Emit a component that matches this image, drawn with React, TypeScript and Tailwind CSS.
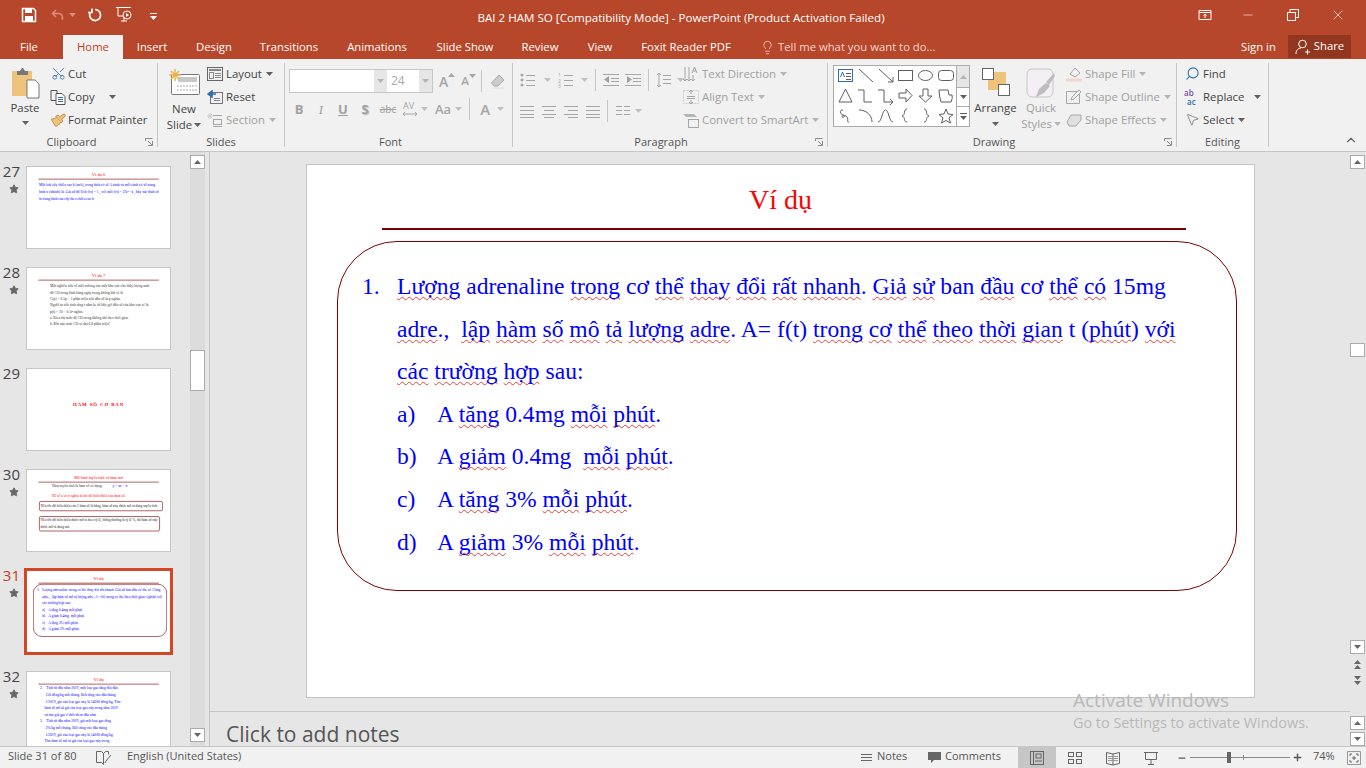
import React from 'react';
import { Scissors, Search, MousePointer2, Lightbulb, Minus, Plus, X, Star, ChevronUp, Paintbrush } from 'lucide-react';

const GREY = '#a6a6a6';

const Caret = ({ color = '#606060', className = '' }: { color?: string; className?: string }) => (
  <svg width="7" height="4" viewBox="0 0 7 4" className={`shrink-0 ${className}`}><path d="M0 0h7L3.5 4z" fill={color} /></svg>
);

const Ic = ({ size = 16, children, className = '' }: { size?: number; children: React.ReactNode; className?: string }) => (
  <svg width={size} height={size} viewBox={`0 0 ${size} ${size}`} fill="none" className={`shrink-0 overflow-visible ${className}`}>{children}</svg>
);

// small word with the spell check squiggle
const W = ({ children }: { children: React.ReactNode }) => (
  <span className="underline decoration-wavy decoration-[#e8403a] decoration-1 underline-offset-2 [text-decoration-skip-ink:none]">{children}</span>
);

const TABS = [
  { label: 'Insert', w: 'w-[58px]' },
  { label: 'Design', w: 'w-[66px]' },
  { label: 'Transitions', w: 'w-[84px]' },
  { label: 'Animations', w: 'w-[92px]' },
  { label: 'Slide Show', w: 'w-[84px]' },
  { label: 'Review', w: 'w-[66px]' },
  { label: 'View', w: 'w-[54px]' },
  { label: 'Foxit Reader PDF', w: 'w-[118px]' },
];

const TitleBar = () => (
  <div className="flex h-[35px] items-center text-white">
    <div className="flex w-[170px] items-center pb-[5px] pl-[21px]">
      <Ic size={16}><path d="M1.5 1.5h11l2 2v11h-13z" stroke="#fff" strokeWidth="1.5" /><rect x="4" y="2" width="7" height="4" fill="#fff" /><rect x="4" y="9" width="8" height="5" fill="#fff" /></Ic>
      <Ic size={16} className="ml-[13px]"><path d="M6 3 2.5 6.5 6 10M3 6.5h6a4 4 0 0 1 3 6" stroke="#d98e78" strokeWidth="1.6" /></Ic>
      <Caret color="#d98e78" className="ml-[3px]" />
      <Ic size={16} className="ml-[11px]"><path d="M8 2.5a5.5 5.5 0 1 1-4.500 2.500M5 1.500v4h-4" stroke="#fff" strokeWidth="1.7" /></Ic>
      <Ic size={18} className="ml-[12px]"><path d="M1 1.5h15M3 2v8h5M6 15h6M9 11v4" stroke="#fff" /><circle cx="12" cy="9" r="4" stroke="#fff" /><path d="M11 7l3 2-3 2z" fill="#fff" /></Ic>
      <svg width="7" height="7" viewBox="0 0 7 7" className="ml-[17px] mt-[2px]"><path d="M0 0h7v1H0zM0 3h7L3.5 7z" fill="#fff" /></svg>
    </div>
    <div className="w-[1006px] pl-[16px] text-center text-[11.6px] whitespace-nowrap">BAI 2 HAM SO [Compatibility Mode] - PowerPoint (Product Activation Failed)</div>
    <div className="flex flex-1 items-center pb-[5px]">
      <Ic size={14} className="ml-[22px]"><path d="M1 2.5h12v9H1zM1 4.5h12M7 10V6M5.5 7.5 7 6l1.5 1.5" stroke="#fff" /></Ic>
      <Minus size={14} strokeWidth={1} className="ml-[29px]" />
      <Ic size={12} className="ml-[32px]"><path d="M.5 3.5h8v8h-8zM3 3V.5h8.500v8H9" stroke="#fff" /></Ic>
      <X size={16} strokeWidth={1} className="ml-[31px]" />
    </div>
  </div>
);

const TabBar = () => (
  <div className="flex h-[24px] items-stretch text-[11.3px] text-white">
    <div className="flex w-[58px] items-center justify-center">File</div>
    <div className="ml-[5px] flex w-[60px] items-center justify-center bg-[#f1f1f1] text-[#c43e1c]">Home</div>
    {TABS.map((t) => (
      <div key={t.label} className={`flex items-center justify-center ${t.w}`}>{t.label}</div>
    ))}
    <div className="ml-[15px] flex w-[495px] items-center text-[#f2d8cf]">
      <Lightbulb size={15} strokeWidth={1.2} className="mr-[3px]" />
      Tell me what you want to do...
    </div>
    <div className="ml-[-14px] flex w-[60px] items-center text-white">Sign in</div>
    <div className="ml-[-13px] mb-px flex w-[63px] items-center justify-center gap-[3px] bg-[#93361f]">
      <Ic size={16}><circle cx="7.500" cy="5" r="3.800" stroke="#fff" /><path d="M1 15c0-4 2.500-6 5-6M10 13h5M12.500 10.500v5" stroke="#fff" /></Ic>
      Share
    </div>
  </div>
);

const Group = ({ w, label, labelPad = '', launcher, children }: { w: string; label: string; labelPad?: string; launcher?: boolean; children: React.ReactNode }) => (
  <div className={`relative flex h-[84px] shrink-0 flex-col border-r border-[#c6c6c6] ${w}`}>
    <div className="flex h-[75px] items-start">{children}</div>
    <div className={`text-center text-[11px] leading-[11px] text-[#555] ${labelPad}`}>{label}</div>
    {launcher && (
      <svg width="8" height="8" viewBox="0 0 8 8" className="absolute bottom-[1px] right-[4px]"><path d="M.5 3V.5H7.500M7.500 3v4.500H3M3 3l4 4" stroke="#8a8a8a" fill="none" /></svg>
    )}
  </div>
);

const Row = ({ icon, label, caret, off, gap = 'ml-[3px]', caretGap = 'ml-[4px]' }: { icon: React.ReactNode; label: string; caret?: boolean; off?: boolean; gap?: string; caretGap?: string }) => (
  <div className={`flex h-[23px] items-center text-[11.4px] whitespace-nowrap ${off ? 'text-[#a0a0a0]' : 'text-[#444]'}`}>
    <span className="flex w-[16px] shrink-0 justify-center">{icon}</span>
    <span className={gap}>{label}</span>
    {caret && <Caret color={off ? '#b5b5b5' : '#606060'} className={caretGap} />}
  </div>
);

const Lines = ({ ys, x1 = 0, x2 = 14, color = GREY }: { ys: number[]; x1?: number; x2?: number; color?: string }) => (
  <>{ys.map((y) => <path key={y} d={`M${x1} ${y}.5H${x2}`} stroke={color} />)}</>
);

const Clipboard = () => (
  <Group w="w-[158px]" label="Clipboard" labelPad="pr-[14px]" launcher>
    <div className="flex w-[50px] shrink-0 flex-col items-center pt-[5px] text-[11.4px] text-[#444]">
      <svg width="29" height="31" viewBox="0 0 29 31">
        <path d="M1 3h20v25H1z" fill="#eec47d" />
        <path d="M6 3h3l2-3h1l2 3h3v4H6z" fill="#777" />
        <path d="M16 12h8l4 4v14H16z" fill="#fff" stroke="#777" />
      </svg>
      <div className="mt-[1px] leading-[16px]">Paste</div>
      <Caret className="mt-[5px]" />
    </div>
    <div className="-mt-px flex flex-col">
      <Row gap="ml-[2px]" icon={<Scissors size={15} strokeWidth={1.300} color="#2f6fb0" className="-rotate-90" />} label="Cut" />
      <Row gap="ml-[2px]" icon={<Ic size={16}><path d="M1 1.500h6v10H1z" stroke="#555" /><path d="M6 4.500h6l3 3v8H6z" fill="#fff" stroke="#555" /><Lines ys={[8, 10, 12]} x1={8} x2={13} color="#2f6fb0" /></Ic>} label="Copy" caret caretGap="ml-[14px]" />
      <Row gap="ml-[2px]" icon={<Paintbrush size={16} strokeWidth={1.300} color="#b98a3c" fill="#eec47d" className="rotate-[8deg]" />} label="Format Painter" />
    </div>
  </Group>
);

const Slides = () => (
  <Group w="w-[127px]" label="Slides">
    <div className="flex w-[49px] shrink-0 flex-col items-center pl-[3px] pt-[6px] text-[11.4px] text-[#444]">
      <svg width="31" height="26" viewBox="0 0 31 26">
        <rect x="2.500" y="5.500" width="28" height="20" rx="1" fill="#fff" stroke="#777" />
        <rect x="9" y="8" width="19" height="5" fill="#c8c8c8" />
        <path d="M8 17h20M8 21h20" stroke="#aaa" strokeDasharray="2 1" />
        <path d="M6 0v12M0 6h12M2 2l8 8M10 2l-8 8" stroke="#e9b44c" strokeWidth="1.500" />
      </svg>
      <div className="mt-[6px] leading-[16px]">New</div>
      <div className="flex items-center gap-[2px] leading-[16px]">Slide <Caret /></div>
    </div>
    <div className="-mt-px flex flex-col">
      <Row icon={<Ic size={16}><rect x=".5" y="1.500" width="15" height="13" stroke="#666" /><path d="M2 4h12" stroke="#888" strokeWidth="2" /><rect x="2.500" y="6.500" width="4" height="6" stroke="#888" /><Lines ys={[7, 9, 11]} x1={8} x2={14} color="#888" /></Ic>} label="Layout" caret />
      <Row icon={<Ic size={16}><rect x="3.500" y="3.500" width="12" height="11" stroke="#777" /><Lines ys={[9, 11]} x1={7} x2={13} color="#888" /><path d="M1 5l4-3v6zM4 5h5" fill="#2f6fb0" stroke="#2f6fb0" strokeWidth="1.500" /></Ic>} label="Reset" />
      <Row off icon={<Ic size={16}><path d="M3 1v6M0 4h6M1 2l4 4M5 2 1 6" stroke="#ccc" /><path d="M6 3.500h9M6 14.500h9" stroke={GREY} /><rect x="6.500" y="7.500" width="8" height="5" stroke={GREY} /></Ic>} label="Section" caret />
    </div>
  </Group>
);

const Combo = ({ w, value }: { w: string; value?: string }) => (
  <div className={`flex h-[22px] items-center justify-between bg-white text-[12px] text-[#aaa] ${w}`}>
    <span className="pl-[3px]">{value}</span>
    <span className="flex h-full w-[13px] items-center justify-center bg-[#e6e6e6]"><Caret color="#b5b5b5" /></span>
  </div>
);

const Sep = ({ className = '' }: { className?: string }) => <div className={`h-[22px] w-px shrink-0 bg-[#c6c6c6] ${className}`} />;

const Gl = ({ c, className = '' }: { c: React.ReactNode; className?: string }) => (
  <span className={`flex h-[22px] items-center justify-center text-[13px] font-bold text-[#a0a0a0] ${className}`}>{c}</span>
);

const Font = () => (
  <Group w="w-[228px]" label="Font" labelPad="pr-[16px]">
    <div className="flex w-full flex-col pl-[4px] pt-[6px]">
      <div className="flex items-center">
        <div className="flex border border-[#c6c6c6]">
          <Combo w="w-[97px]" />
          <div className="w-px bg-white" />
          <Combo w="w-[44px]" value="24" />
        </div>
        <span className="ml-[6px] flex items-start text-[14px] font-semibold text-[#a6a6a6]">A<Caret color="#a6a6a6" className="mt-[2px] rotate-180" /></span>
        <span className="ml-[6px] flex items-start text-[11.500px] font-semibold text-[#a6a6a6]">A<Caret color="#a6a6a6" className="mt-[2px]" /></span>
        <Sep className="ml-[5px]" />
        <Ic size={16} className="ml-[8px]"><path d="M4 13 1.500 10 9 2l5 5-6 6z" fill="#ccc" stroke="#aaa" /><path d="M2 15h12" stroke="#ddd" /></Ic>
      </div>
      <div className="mt-[5px] flex items-center">
        <Gl c="B" className="ml-[4px] w-[12px]" />
        <Gl c={<i className="font-serif font-normal">I</i>} className="ml-[10px] w-[12px]" />
        <Gl c={<u>U</u>} className="ml-[10px] w-[12px]" />
        <Gl c={<span className="[text-shadow:1px_1px_1px_#bbb]">S</span>} className="ml-[10px] w-[12px]" />
        <Gl c={<s className="text-[10px] font-normal">abc</s>} className="ml-[8px] w-[18px]" />
        <Ic size={16} className="ml-[5px]"><text x="1" y="8" fontSize="9" fill="#a6a6a6" fontFamily="'Open Sans'">AV</text><path d="M1 13h14M3 11l-2 2 2 2M13 11l2 2-2 2" stroke="#a6a6a6" /></Ic>
        <Caret color="#c0c0c0" className="ml-[3px]" />
        <span className="ml-[7px] text-[13px] font-semibold text-[#a6a6a6]">Aa</span>
        <Caret color="#c0c0c0" className="ml-[4px]" />
        <Sep className="ml-[7px]" />
        <span className="ml-[10px] text-[15px] font-semibold text-[#a6a6a6]">A</span>
        <Caret color="#c0c0c0" className="ml-[7px]" />
      </div>
    </div>
  </Group>
);

const Paragraph = () => (
  <Group w="w-[315px]" label="Paragraph" labelPad="pr-[18px]" launcher>
    <div className="flex w-[170px] shrink-0 flex-col pl-[7px] pt-[4px]">
      <div className="flex h-[26px] items-center">
        <Ic size={16}><circle cx="2" cy="3" r="1.500" fill={GREY} /><circle cx="2" cy="8" r="1.500" fill={GREY} /><circle cx="2" cy="13" r="1.500" fill={GREY} /><Lines ys={[3, 8, 13]} x1={6} x2={15} /></Ic>
        <Caret color="#c0c0c0" className="ml-[8px]" />
        <Ic size={16} className="ml-[7px]"><text x="0" y="5" fontSize="5" fill={GREY}>1</text><text x="0" y="10.500" fontSize="5" fill={GREY}>2</text><text x="0" y="16" fontSize="5" fill={GREY}>3</text><Lines ys={[3, 8, 13]} x1={6} x2={15} /></Ic>
        <Caret color="#c0c0c0" className="ml-[7px]" />
        <Sep className="ml-[7px]" />
        <Ic size={16} className="ml-[7px]"><Lines ys={[2, 13]} x1={0} x2={16} /><Lines ys={[6, 9]} x1={8} x2={16} /><path d="M6 4 1 7.500 6 11z" fill="#a0a0a0" /></Ic>
        <Ic size={16} className="ml-[6px]"><Lines ys={[2, 13]} x1={0} x2={16} /><Lines ys={[6, 9]} x1={8} x2={16} /><path d="M2 4l5 3.500L2 11z" fill="#a0a0a0" /></Ic>
        <Sep className="ml-[7px]" />
        <Ic size={16} className="ml-[7px]"><path d="M3 1v14M1 3l2-2 2 2M1 13l2 2 2-2" stroke={GREY} /><Lines ys={[3, 7, 11]} x1={7} x2={15} /></Ic>
        <Caret color="#c0c0c0" className="ml-[5px]" />
      </div>
      <div className="mt-[7px] flex h-[22px] items-center">
        <Ic size={14}><Lines ys={[2, 6, 10, 13]} /></Ic>
        <Ic size={14} className="ml-[8px]"><Lines ys={[2, 10]} /><Lines ys={[6, 13]} x1={2} x2={12} /></Ic>
        <Ic size={14} className="ml-[8px]"><Lines ys={[2, 10]} /><Lines ys={[6, 13]} x1={4} x2={14} /></Ic>
        <Ic size={14} className="ml-[8px]"><Lines ys={[2, 6, 10, 13]} /></Ic>
        <Sep className="ml-[7px]" />
        <Ic size={14} className="ml-[8px]"><Lines ys={[2, 6, 10]} x1={0} x2={6} /><Lines ys={[2, 6, 10]} x1={8} x2={14} /></Ic>
        <Caret color="#c0c0c0" className="ml-[5px]" />
      </div>
    </div>
    <div className="-mt-px flex flex-col">
      <Row off icon={<Ic size={16}><path d="M2 1v14M6 1v14M10 9v6" stroke={GREY} /><path d="M0 13l2 2 2-2M4 13l2 2 2-2M8 13l2 2 2-2" stroke={GREY} /><path d="M9 7l2.500-6L14 7M10 5h3" stroke={GREY} /></Ic>} label="Text Direction" caret />
      <Row off icon={<Ic size={16}><path d="M.5 1.500h15v13H.5z" stroke="#ccc" strokeDasharray="2 1" /><Lines ys={[7, 9]} x1={4} x2={12} /><path d="M8 1v4M6 3l2-2 2 2M8 15v-4M6 13l2 2 2-2" stroke={GREY} /></Ic>} label="Align Text" caret />
      <Row off icon={<Ic size={16}><path d="M0 2h11l3 3H3z" fill="#b5b5b5" /><rect x="5.500" y="7.500" width="10" height="8" stroke={GREY} /></Ic>} label="Convert to SmartArt" caret />
    </div>
  </Group>
);

const S = '#5f5f5f';
const SHAPES: React.ReactNode[] = [
  <><rect x=".5" y="1.500" width="14" height="12" fill="#fff" stroke="#2f6fb0" /><path d="M2.500 9 4.500 4l2 5" stroke="#2f6fb0" /><Lines ys={[5, 8, 11]} x1={8} x2={13} color={S} /></>,
  <path d="M1 1l14 13" stroke={S} />,
  <path d="M1 1l14 13M15 9v5h-5" stroke={S} />,
  <rect x=".5" y="2.500" width="14" height="10" stroke={S} />,
  <ellipse cx="7.500" cy="7.500" rx="7" ry="5" stroke={S} />,
  <rect x=".5" y="2.500" width="15" height="10" rx="3" stroke={S} />,
  <path d="M7.500 1 14 14H1z" stroke={S} />,
  <path d="M0 2h6v12h8" stroke={S} />,
  <path d="M0 2h6v12h8M12 11l3 3-3 3" stroke={S} />,
  <path d="M1 5h7V1l6 6.500L8 14v-4H1z" stroke={S} />,
  <path d="M5 1h5v7h4l-6.500 6L1 8h4z" stroke={S} />,
  <path d="M1 2h9l1 5h3q1 3-1 7H3q-2-6-2-12z" stroke={S} />,
  <path d="M5 2C1 2 2 6 5 7c4 1 0 3-1 2s3-3 5 0-1 5 2 5" stroke={S} />,
  <path d="M1 2c7 0 13 5 13 12" stroke={S} />,
  <path d="M0 14C4 14 4 2 7.500 2S11 14 15 14" stroke={S} />,
  <path d="M9 1C5 1 8 7 4 8c4 1 1 6 5 6" stroke={S} />,
  <path d="M6 1c4 0 1 6 5 7-4 1-1 6-5 6" stroke={S} />,
  <path d="M8 1l2 5 5 .5-4 3.500 1.500 5L8 12.500 3.500 15 5 10 1 6.500 6 6z" stroke={S} />,
];

const Drawing = () => (
  <Group w="w-[349px]" label="Drawing" labelPad="pr-[16px]" launcher>
    <div className="mt-[2px] ml-[5px] flex h-[62px] w-[137px] shrink-0 border border-[#ababab] bg-white">
      <div className="grid flex-1 grid-cols-[repeat(6,20px)] grid-rows-[repeat(3,20px)] pl-[2px]">
        {SHAPES.map((s, i) => (
          <span key={i} className="flex items-center justify-center"><Ic size={16}>{s}</Ic></span>
        ))}
      </div>
      <div className="flex w-[14px] flex-col border-l border-[#ababab]">
        <div className="flex h-[21px] items-center justify-center bg-[#e6e6e6]"><Caret color="#b5b5b5" className="rotate-180" /></div>
        <div className="flex h-[20px] items-center justify-center border-y border-[#ababab]"><Caret /></div>
        <div className="flex flex-1 flex-col items-center justify-center gap-[2px]"><div className="h-px w-[7px] bg-[#606060]" /><Caret /></div>
      </div>
    </div>
    <div className="flex w-[50px] shrink-0 flex-col items-center pl-[1px] pt-[5px] text-[11.4px] text-[#444]">
      <svg width="28" height="28" viewBox="0 0 28 28">
        <rect x="6" y="4" width="18" height="18" fill="#eec47d" />
        <rect x=".5" y=".5" width="11" height="11" fill="#fff" stroke="#666" />
        <rect x="16.500" y="16.500" width="11" height="11" fill="#fff" stroke="#666" />
      </svg>
      <div className="mt-[4px] leading-[16px]">Arrange</div>
      <Caret className="mt-[6px]" />
    </div>
    <div className="flex w-[42px] shrink-0 flex-col items-center pt-[5px] text-[11.4px] text-[#a0a0a0]">
      <svg width="30" height="30" viewBox="0 0 30 30">
        <rect x="1" y="1" width="26" height="28" rx="5" fill="#f3eff4" stroke="#c6c6c6" />
        <path d="M10 29 l3-8 7-6 4 3-6 7zM20 14l8-9 1 3-6 9z" fill="#bdbdbd" />
      </svg>
      <div className="mt-[2px] leading-[16px]">Quick</div>
      <div className="flex items-center gap-[2px] leading-[16px]">Styles <Caret color="#b5b5b5" /></div>
    </div>
    <div className="-mt-px flex flex-col pl-[4px]">
      <Row off icon={<Ic size={16}><path d="M4 8l5-6 5 5-5 4z" stroke={GREY} /><path d="M0 14h16" stroke="#f0d6cd" strokeWidth="3" /></Ic>} label="Shape Fill" caret />
      <Row off icon={<Ic size={16}><path d="M.5 2.500h13v12H.5z" stroke={GREY} /><path d="M5 11l1-3 7-7 2 2-7 7z" fill="#f1f1f1" stroke={GREY} /></Ic>} label="Shape Outline" caret />
      <Row off icon={<Ic size={16}><path d="M1 10l4-7h10v5l-5 6H3z" fill="#e0e0e0" stroke={GREY} /></Ic>} label="Shape Effects" caret />
    </div>
  </Group>
);

const Editing = () => (
  <Group w="w-[92px]" label="Editing">
    <div className="-mt-px flex flex-col pl-[7px]">
      <Row icon={<Search size={15} color="#2f6fb0" strokeWidth={1.700} className="-scale-x-100" />} label="Find" />
      <Row icon={<Ic size={16}><text x="0" y="7" fontSize="8" fill="#7a4fa3" fontWeight="600">ab</text><text x="3" y="16" fontSize="8" fill="#2f6fb0" fontWeight="600">ac</text></Ic>} label="Replace" caret caretGap="ml-[10px]" />
      <Row icon={<MousePointer2 size={15} strokeWidth={1} color="#555" />} label="Select" caret />
    </div>
  </Group>
);

const Ribbon = () => (
  <div className="flex h-[93px] items-start border-b border-[#c6c6c6] bg-[#f1f1f1] pt-[4px]">
    <Clipboard />
    <Slides />
    <Font />
    <Paragraph />
    <Drawing />
    <Editing />
    <div className="flex h-[84px] flex-1 items-end justify-end pr-[8px]">
      <ChevronUp size={14} color="#666" strokeWidth={2} />
    </div>
  </div>
);

const ScrollBtn = ({ up, className = '' }: { up?: boolean; className?: string }) => (
  <div className={`flex h-[14px] w-[15px] shrink-0 items-center justify-center border border-[#ababab] bg-white ${className}`}>
    <Caret color="#666" className={up ? 'rotate-180' : ''} />
  </div>
);

const serif = "font-['Liberation_Serif','Noto_Sans_CJK_SC',serif]";

const SlideBody = () => (
  <>
    <div className="flex">
      <div className="w-[35px] shrink-0">1.</div>
      <div className="whitespace-nowrap">
        <div><W>Lượng</W> adrenaline <W>trong</W> cơ <W>thể</W> <W>thay</W> <W>đổi</W> <W>rất</W> <W>nhanh</W>. <W>Giả</W> <W>sử</W> ban <W>đầu</W> cơ <W>thể</W> <W>có</W> 15mg</div>
        <div><W>adre</W>.,&nbsp; <W>lập</W> <W>hàm</W> <W>số</W> <W>mô</W> <W>tả</W> <W>lượng</W> <W>adre</W>. A= f(t) <W>trong</W> <W>cơ</W> <W>thể</W> <W>theo</W> <W>thời</W> <W>gian</W> t (<W>phút</W>) <W>với</W></div>
        <div><W>các</W> <W>trường</W> <W>hợp</W> sau:</div>
      </div>
    </div>
    <div className="pl-[35px]">
      <div className="flex"><div className="w-[40px]">a)</div><div>A <W>tăng</W> 0.4mg <W>mỗi</W> <W>phút</W>.</div></div>
      <div className="flex"><div className="w-[40px]">b)</div><div>A <W>giảm</W> 0.4mg&nbsp; <W>mỗi</W> <W>phút</W>.</div></div>
      <div className="flex"><div className="w-[40px]">c)</div><div>A <W>tăng</W> 3% <W>mỗi</W> <W>phút</W>.</div></div>
      <div className="flex"><div className="w-[40px]">d)</div><div>A <W>giảm</W> 3% <W>mỗi</W> <W>phút</W>.</div></div>
    </div>
  </>
);

// full size slide drawn on a 948px wide canvas, then shrunk for the thumbnails
const Mini = ({ children }: { children: React.ReactNode }) => (
  <div className="h-[81px] w-[143px] overflow-hidden bg-white">
    <div className={`h-[533px] w-[948px] origin-top-left scale-[0.151] ${serif}`}>{children}</div>
  </div>
);

const MiniHead = ({ title, size = 'text-[30px]' }: { title: string; size?: string }) => (
  <>
    <div className={`flex h-[78px] items-center justify-center pt-[20px] text-[#ff0000] ${size}`}>{title}</div>
    <div className="mx-[75px] h-[4px] bg-[#7f0000]" />
  </>
);

const MiniLines = ({ lines, className = '' }: { lines: string[]; className?: string }) => (
  <div className={`text-[24px] whitespace-pre ${className}`}>
    {lines.map((l) => <div key={l}>{l}</div>)}
  </div>
);

const THUMBS: { n: number; star: boolean; body: React.ReactNode; active?: boolean }[] = [
  {
    n: 27, star: true,
    body: (
      <Mini>
        <MiniHead title="Ví dụ 6" />
        <MiniLines className="ml-[79px] mt-[15px] leading-[46px] text-[#0000ff]" lines={['Một loài cây chiều cao h (mét), trong bình có số A cành và mỗi cành có số trung', 'bình n (nhánh) là. Giả sử độ lệch f(x) = 1 , với mỗi f(x) = 2/k² - k , hãy xác định số', 'lá trung bình của cây theo chiều cao h']} />
      </Mini>
    ),
  },
  {
    n: 28, star: true,
    body: (
      <Mini>
        <MiniHead title="Ví dụ 7" />
        <MiniLines className="ml-[152px] mt-[17px] leading-[42px] text-[#333]" lines={['Một nghiên cứu về môi trường của một khu vực cho thấy lượng mức', 'độ CO trong bình hàng ngày trong không khí sẽ là', 'C(p) = 0.5p + 1 phần triệu nếu dân số là p nghìn.', 'Người ta ước tính rằng t năm kể từ bây giờ dân số của khu vực sẽ là', 'p(t) = 10 + 0.1t² nghìn.', 'a. Biểu thị mức độ CO trong không khí theo thời gian.', 'b. Khi nào mức CO sẽ đạt 6.8 phần triệu?']} />
      </Mini>
    ),
  },
  {
    n: 29, star: false,
    body: (
      <Mini>
        <div className="flex h-full items-center justify-center pb-[72px] text-[32px] font-bold tracking-[6px] text-[#ff0000]">HÀM SỐ CƠ BẢN</div>
      </Mini>
    ),
  },
  {
    n: 30, star: true,
    body: (
      <Mini>
        <MiniHead title="Mô hình tuyến tính và hàm mũ" size="text-[26px]" />
        <div className="ml-[165px] mt-[4px] text-[24px] leading-[42px] whitespace-nowrap text-[#333]">Hàm tuyến tính là hàm số có dạng: <span className="ml-[60px] text-[#0000ff]">y = ax + b</span></div>
        <div className="ml-[165px] mt-[20px] text-[24px] leading-[42px] whitespace-nowrap text-[#ff0000]">Hệ số a có ý nghĩa là tốc độ biến thiên của hàm số.</div>
        <div className="ml-[80px] mt-[16px] w-[820px] rounded-[12px] border-[4px] border-[#7f0000] px-[6px] text-[23px] leading-[58px] whitespace-nowrap text-[#222]">Nếu tốc độ biến thiên của 1 hàm số là hằng, hàm số này được mô tả dạng tuyến tính</div>
        <div className="ml-[80px] mt-[34px] w-[800px] rounded-[12px] border-[4px] border-[#7f0000] px-[6px] text-[23px] leading-[46px] text-[#222]">Nếu tốc độ biến thiên được mô tả theo tỷ lệ, thông thường là tỷ lệ %, thì hàm số này được mô tả dạng mũ.</div>
      </Mini>
    ),
  },
  {
    n: 31, star: true, active: true,
    body: (
      <Mini>
        <MiniHead title="Ví dụ" />
        <div className="ml-[40px] mt-[4px] h-[350px] w-[887px] rounded-[60px] border-[4px] border-[#7f0000] pl-[22px] pt-[16px] text-[24px] leading-[42.600px] text-[#0000ff]">
          <SlideBody />
        </div>
      </Mini>
    ),
  },
  {
    n: 32, star: true,
    body: (
      <Mini>
        <MiniHead title="Ví dụ" />
        <MiniLines className="ml-[86px] mt-[2px] leading-[44px] text-[#0000ff]" lines={['2.    Tính từ đầu năm 2019, một loại gạo tăng đều đặn', '      150 đồng/kg mỗi tháng. Biết rằng vào đầu tháng', '      1/2019, giá của loại gạo này là 14000 đồng/kg. Tìm', '     hàm số mô tả giá của loại gạo này trong năm 2019', '     và tìm giá gạo ở thời điểm đầu năm', '3.    Tính từ đầu năm 2019, giá một loại gạo tăng', '      3%/kg mỗi tháng. Biết rằng vào đầu tháng', '      1/2019, giá của loại gạo này là 14000 đồng/kg.', '     Tìm hàm số mô tả giá của loại gạo này trong']} />
      </Mini>
    ),
  },
];

const Sidebar = () => (
  <div className="flex h-full w-[205px] shrink-0 overflow-hidden">
    <div className="flex h-full w-[190px] flex-col gap-[18px] overflow-hidden pt-[14px]">
      {THUMBS.map((t) => (
        <div key={t.n} className="flex h-[83px] shrink-0 items-start">
          <div className="-mt-[2px] flex w-[26px] shrink-0 flex-col items-end pr-[6px]">
            <div className={`text-[15px] leading-[15px] ${t.active ? 'text-[#c43e1c]' : 'text-[#444]'}`}>{t.n}</div>
            {t.star && <Star size={10} fill="#666" color="#666" className="mr-px mt-[5px]" />}
          </div>
          <div className={t.active ? 'ml-[-2px] mt-[-2px] border-[3px] border-[#d24726]' : 'border border-[#c6c6c6]'}>{t.body}</div>
        </div>
      ))}
    </div>
    <div className="flex h-full w-[15px] flex-col bg-[#dcdcdc]">
      <ScrollBtn up className="mt-[3px]" />
      <div className="mt-[181px] h-[41px] w-[15px] border border-[#ababab] bg-white" />
      <ScrollBtn className="mt-auto mb-[4px]" />
    </div>
  </div>
);

const Slide = () => (
  <div className={`ml-[96px] mt-[12px] h-[534px] w-[949px] shrink-0 border border-[#c6c6c6] bg-white ${serif}`}>
    <div className="flex h-[63px] items-end justify-center pb-[11px] text-[28px] leading-[34px] text-[#ff0000]">Ví dụ</div>
    <div className="ml-[75px] h-[2px] w-[804px] bg-[#7f0000]" />
    <div className="ml-[30px] mt-[11px] h-[350px] w-[900px] rounded-[60px] border border-[#7f0000] pl-[24px] pt-[23px] text-[23.6px] leading-[42.600px] text-[#0000ff]">
      <SlideBody />
    </div>
  </div>
);

const Workspace = () => (
  <div className="relative ml-[4px] flex min-w-0 flex-1 border-l border-[#c6c6c6]">
    <div className="flex min-w-0 flex-1 flex-col">
      <div className="h-[559px] shrink-0 overflow-hidden"><Slide /></div>
      <div className="flex-1 overflow-hidden border-t border-[#c6c6c6] pl-[16px] text-[21px] leading-[44px] text-[#555]">Click to add notes</div>
    </div>
    <div className="flex w-[16px] shrink-0 flex-col">
      <ScrollBtn up className="mt-[3px]" />
      <div className="mt-[174px] h-[15px] w-[15px] border border-[#ababab] bg-white" />
      <ScrollBtn className="mt-[283px]" />
      <div className="mt-[2px] flex h-[17px] w-[15px] flex-col items-center justify-center gap-px"><Caret color="#666" className="rotate-180" /><Caret color="#666" className="rotate-180" /></div>
      <div className="flex h-[17px] w-[15px] flex-col items-center justify-center gap-px"><Caret color="#666" /><Caret color="#666" /></div>
      <ScrollBtn up className="mt-[28px]" />
      <ScrollBtn className="mt-[2px]" />
    </div>
    <div className="pointer-events-none absolute left-[863px] top-[535px] text-[#b8b8b8]">
      <div className="text-[19px] leading-[26px]">Activate Windows</div>
      <div className="text-[14.4px] leading-[20px]">Go to Settings to activate Windows.</div>
    </div>
  </div>
);

const StatusBar = () => (
  <div className="flex h-[22px] items-center border-t border-[#c6c6c6] bg-[#f1f1f1] text-[11px] text-[#555]">
    <span className="ml-[8px] w-[88px] pb-[2px]">Slide 31 of 80</span>
    <Ic size={15}><path d="M.5 1.500h5l2 2 2-2h3v3M.5 1.500v11h5l2 2V3.500M10 11l5-6M9 13l1-2" stroke="#666" /></Ic>
    <span className="ml-[16px] w-[733px] pb-[2px]">English (United States)</span>
    <Ic size={13}><Lines ys={[3, 6, 9]} x1={1} x2={12} color="#666" /></Ic>
    <span className="ml-[4px] w-[51px] pb-[2px]">Notes</span>
    <svg width="13" height="13" viewBox="0 0 13 13"><path d="M0 1h13v8H6l-3 3V9H0z" fill="#666" /></svg>
    <span className="ml-[4px] w-[73px] pb-[2px]">Comments</span>
    <div className="flex h-full w-[38px] items-center justify-center bg-[#c6c6c6]">
      <Ic size={14}><rect x=".5" y=".5" width="13" height="13" stroke="#666" /><path d="M3.500 1v12" stroke="#666" /><rect x="6" y="3" width="5" height="4" stroke="#666" /><path d="M5 10h7" stroke="#666" /></Ic>
    </div>
    <Ic size={14} className="ml-[12px]"><rect x=".5" y="1.500" width="5" height="4" stroke="#666" /><rect x="8.500" y="1.500" width="5" height="4" stroke="#666" /><rect x=".5" y="8.500" width="5" height="4" stroke="#666" /><rect x="8.500" y="8.500" width="5" height="4" stroke="#666" /></Ic>
    <Ic size={14} className="ml-[24px]"><path d="M.5 1.500 7 3l6.500-1.500v11L7 14 .5 12.500zM7 3v11" stroke="#666" /><Lines ys={[5, 7, 9]} x1={2} x2={12} color="#999" /></Ic>
    <Ic size={14} className="ml-[24px]"><path d="M0 1.500h14M1.500 2v6.500h11V2M7 9v4M4 13.500h6" stroke="#666" /></Ic>
    <Minus size={10} strokeWidth={3} color="#555" className="ml-[19px]" />
    <div className="ml-[3px] flex w-[100px] items-center">
      <div className="h-px w-[37px] bg-[#8a8a8a]" />
      <div className="h-[11px] w-[4px] bg-[#666]" />
      <div className="h-px w-[12px] bg-[#8a8a8a]" />
      <div className="h-[5px] w-px bg-[#8a8a8a]" />
      <div className="h-px flex-1 bg-[#8a8a8a]" />
    </div>
    <Plus size={11} strokeWidth={3} color="#555" className="ml-[2px]" />
    <span className="ml-[10px] w-[34px] pb-[2px]">74%</span>
    <Ic size={14}><path d="M.5.500h13v13H.5z" stroke="#999" /><path d="M3 5V3h2M9 3h2v2M11 9v2H9M5 11H3V9M7 5v4M5 7h4" stroke="#666" /></Ic>
  </div>
);

export default function App() {
  return (
    <div className="flex h-[768px] w-[1366px] flex-col overflow-hidden bg-[#e6e6e6] font-['Open_Sans',sans-serif]">
      <div className="bg-[#b7472a]">
        <TitleBar />
        <TabBar />
      </div>
      <Ribbon />
      <div className="flex min-h-0 flex-1">
        <Sidebar />
        <Workspace />
      </div>
      <StatusBar />
    </div>
  );
}
